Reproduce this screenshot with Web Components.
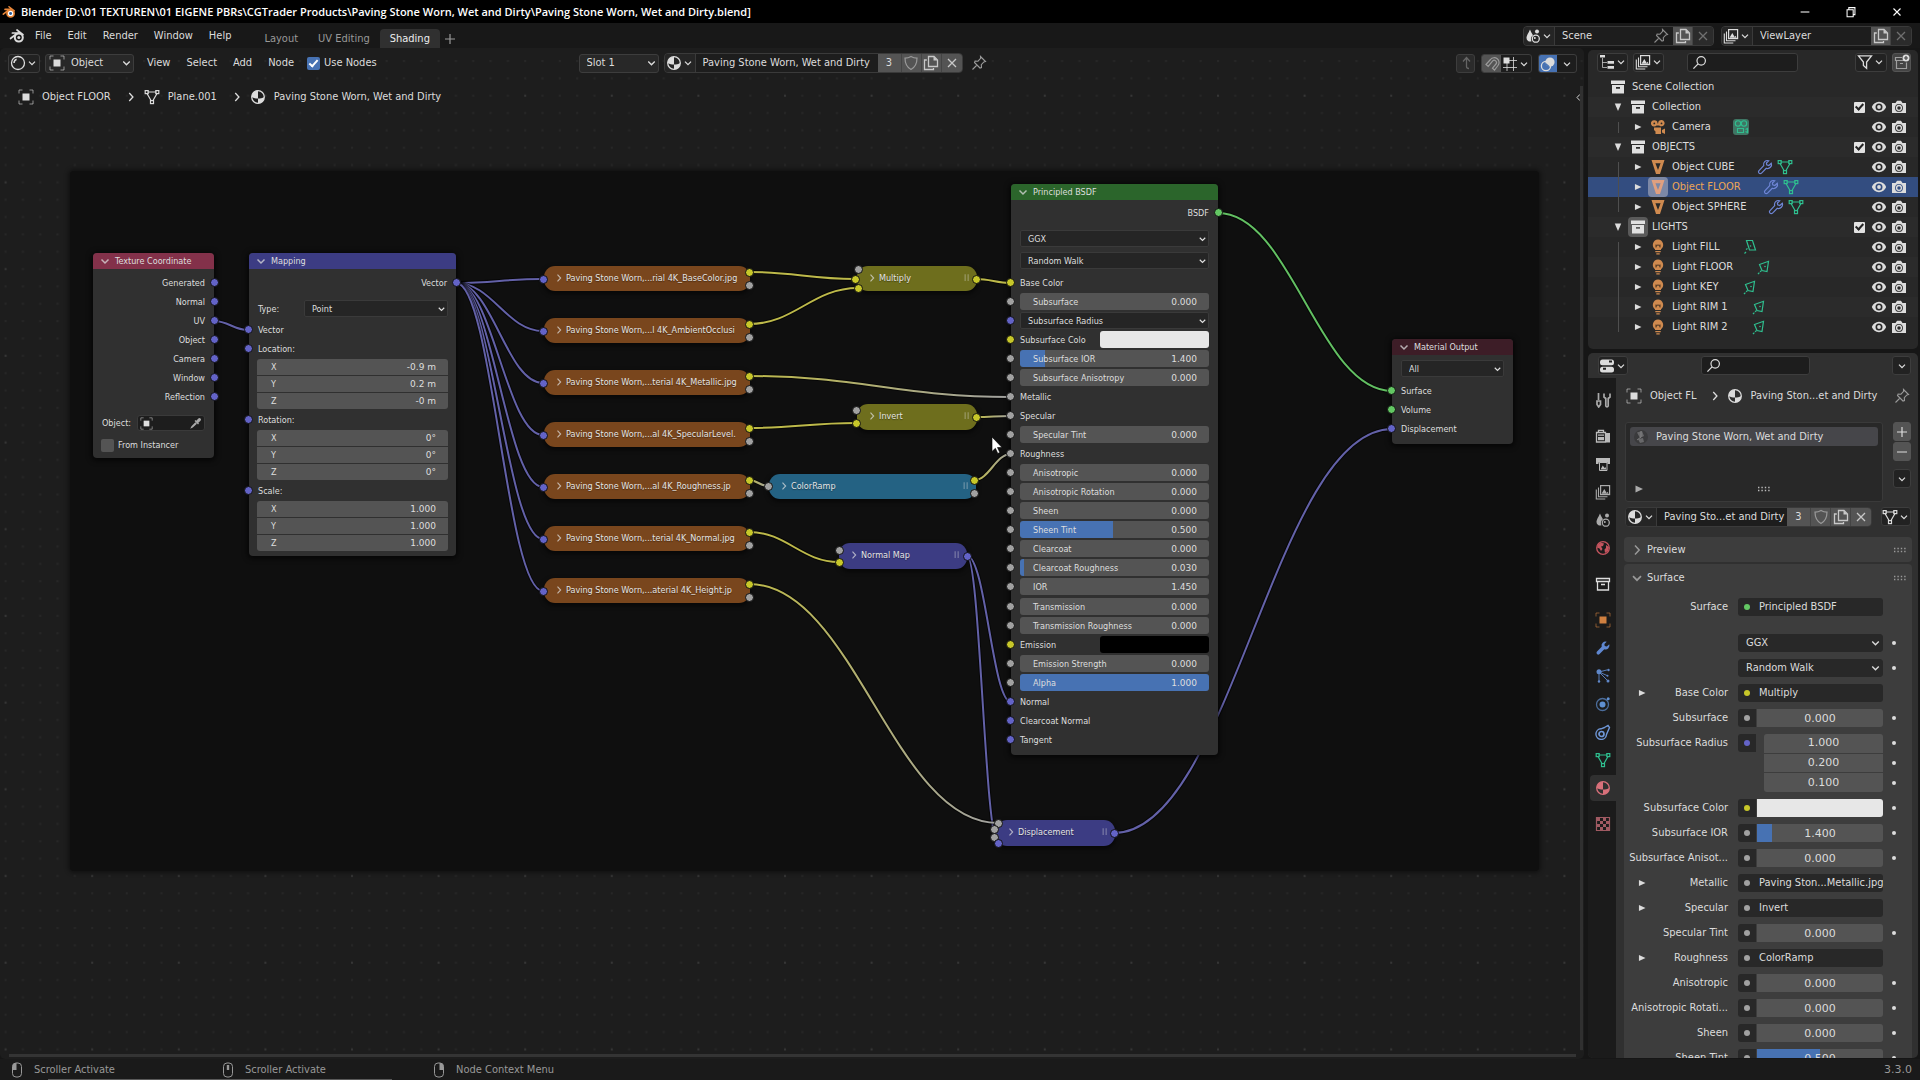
<!DOCTYPE html>
<html lang="en">
<head>
<meta charset="utf-8">
<title>Blender</title>
<style>
html,body{margin:0;height:100%;background:#161616}
body{font:11px/14px "DejaVu Sans Condensed","DejaVu Sans",sans-serif;color:#dcdcdc;overflow:hidden}
</style>
</head>
<body>
<bl-app></bl-app>
<script>
const ICONS={
logo:'<path d="M1.5 10.5 8.6 5H3.4M8 2l6 4.6" fill="none" stroke="currentColor" stroke-width="1.7" stroke-linecap="round"/><circle cx="9.8" cy="9.6" r="4" fill="none" stroke="currentColor" stroke-width="2"/><circle cx="9.8" cy="9.6" r="1.5" fill="currentColor"/>',
logoc:'<path d="M1.5 10.5 8.6 5H3.4M8 2l6 4.6" fill="none" stroke="#e8873a" stroke-width="1.8" stroke-linecap="round"/><circle cx="9.8" cy="9.6" r="4" fill="#fff" stroke="#e8873a" stroke-width="2"/><circle cx="9.8" cy="9.6" r="1.7" fill="#2a5a94"/>',
down:'<path d="M4 6.2 8 10.2 12 6.2" fill="none" stroke="currentColor" stroke-width="1.7"/>',
right:'<path d="M6 3.5 10.2 8 6 12.5" fill="none" stroke="currentColor" stroke-width="1.5"/>',
left:'<path d="M10 3.5 5.8 8 10 12.5" fill="none" stroke="currentColor" stroke-width="1.4"/>',
tright:'<path d="M4.5 4.500v7L12 8z" fill="currentColor"/>',
tdown:'<path d="M4.3 4h7.4L8 12.500z" fill="currentColor"/>',
object:'<rect x="4.5" y="4.5" width="7" height="7" fill="currentColor"/><path d="M1 4.5V1h3.5M11.500 1H15v3.500M15 11.500V15h-3.500M4.500 15H1v-3.500" fill="none" stroke="currentColor" stroke-opacity=".6"/>',
mesh:'<path d="M3.500 3h9M3 4.500 7.300 12M13 4.500 8.700 12" fill="none" stroke="currentColor" stroke-width="1.200"/><g fill="none" stroke="currentColor" stroke-width="1.200"><rect x="1.200" y="1.600" width="3" height="3"/><rect x="11.800" y="1.600" width="3" height="3"/><rect x="6.500" y="11.600" width="3" height="3"/></g>',
material:'<circle cx="8" cy="8" r="6.300" fill="none" stroke="currentColor" stroke-width="1.300"/><path d="M8 1.700A6.300 6.300 0 0 0 1.700 8c2 1.200 4 1.600 6.300 1.600zM8 9.600c2.200 0 4.400-.6 6.300-1.600A6.300 6.300 0 0 1 8 14.300z" fill="currentColor"/>',
sphere:'<circle cx="8" cy="8" r="6.500" fill="none" stroke="currentColor" stroke-width="1.300"/><path d="M4 8a4 4 0 0 1 2.600-3.700" fill="none" stroke="currentColor" stroke-width="1.500"/>',
shield:'<path d="M8 1.500c2 1.200 4 1.600 6 1.600 0 5.400-1.400 9-6 11.400C3.400 12.100 2 8.500 2 3.100c2 0 4-.4 6-1.600z" fill="none" stroke="currentColor" stroke-width="1.200"/>',
copy:'<path d="M5.500 1.500h5.500l3.500 3.500v6.500h-9z" fill="none" stroke="currentColor" stroke-width="1.300"/><path d="M10.500 1.200V5.500h4.200z" fill="currentColor"/><path d="M3.800 5H1.500v9.500h9V13" fill="none" stroke="currentColor" stroke-width="1.300"/>',
x:'<path d="M4 4l8 8M12 4l-8 8" fill="none" stroke="currentColor" stroke-width="1.300"/>',
pin:'<path d="M9.500 1.500l5 5-1.600.4-2.600 2.700.2 2.900-1.500.5-5.500-5.500.6-1.500 2.900.2L9.600 3.400zM6 10l-4.500 4.500" fill="none" stroke="currentColor" stroke-width="1.100"/>',
up:'<path d="M8.500 3v8.500q0 2 2.500 2M5 6.500 8.500 2.500 12 6.500" fill="none" stroke="currentColor" stroke-width="1.300"/>',
magnet:'<path d="M2 8.500l4.500-5a4.800 4.800 0 0 1 7.500 6l-3.500 4.500-2-1.800L12 8a2.200 2.200 0 0 0-3.500-2.800L4.200 10.300z" fill="none" stroke="currentColor" stroke-width="1.200"/>',
snap:'<path d="M5 5v10M11.500 1v14M1 11.500h14M6 4.500h9" stroke="currentColor" stroke-width="1" fill="none" opacity=".8"/><rect x="1.500" y="1.500" width="6" height="6" fill="currentColor"/>',
overlay:'<circle cx="10" cy="6" r="4.600" fill="currentColor"/><circle cx="6" cy="10" r="4.600" fill="none" stroke="currentColor" stroke-width="1.300"/><path d="M5.500 7.500 9 10.500" stroke="#4772b3" stroke-width="1.200"/>',
outliner:'<path d="M3.500 4v9.500H8M3.500 8.500H8" fill="none" stroke="currentColor" opacity=".7"/><path d="M1 1h5v2.600H1zM8.500 7h6.500v2.800H8.500zM8.500 12h6.500v2.800H8.500z" fill="currentColor"/>',
images:'<rect x="5.600" y="1.600" width="9" height="9" fill="none" stroke="currentColor" stroke-width="1.200"/><path d="M6.500 9.800 9.300 5l2.400 4 1-1.200 1 2z" fill="currentColor"/><path d="M3.500 3.500v9.200h9M1.300 5.500V15h9" fill="none" stroke="currentColor" stroke-width="1.100"/>',
search:'<circle cx="9.800" cy="6.200" r="4.500" fill="none" stroke="currentColor" stroke-width="1.300"/><path d="M6.500 9.500 1.500 14.500" stroke="currentColor" stroke-width="1.400"/>',
filter:'<path d="M1.500 1.800h13L9.600 8v6.300L6.400 11.500V8z" fill="none" stroke="currentColor" stroke-width="1.300"/>',
newcoll:'<path d="M8 3.500H1.500v3h10M2.500 6.500V14.500h10V8.500M6 9.500h3" fill="none" stroke="currentColor" stroke-opacity=".6" stroke-width="1.200"/><circle cx="12" cy="4" r="3.500" fill="currentColor"/><path d="M12 2v4M10 4h4" stroke="#444" stroke-width="1.200"/>',
coll:'<path d="M1 1.500h14v3.500H1zM2 6h12v8.500H2zM6 8v1.700h4V8z" fill="currentColor" fill-rule="evenodd"/>',
collo:'<path d="M1.500 2.500h13v3h-13zM2.500 5.500V14h11V5.500M6 8.500h4" fill="none" stroke="currentColor" stroke-width="1.300"/>',
camera:'<path d="M4.300 1.200a3.200 3.200 0 1 0 2.300 5.300h2.600a3.200 3.200 0 1 0-1-1.900H7.500A3.200 3.200 0 0 0 4.300 1.200zM4 8.500h7V15H5.500v-2.500L4 11zM12 11l3-1.500V15l-3-1.500z" fill="currentColor"/><circle cx="4.300" cy="4.400" r=".9" fill="#282828"/><circle cx="11.500" cy="4.400" r=".9" fill="#282828"/>',
camdata:'<g fill="none" stroke="currentColor" stroke-width="1.100"><circle cx="5" cy="4.500" r="2.700"/><circle cx="11" cy="4.500" r="2.700"/><path d="M4.500 9.500h6v4h-6zM12.500 10.500l2-1v4l-2-1"/></g>',
meshobj:'<path d="M1.500 1h13L10 15H6zM5.400 4.200 8 11l2.600-6.800z" fill="currentColor" fill-rule="evenodd"/>',
wrench:'<path d="M14.300 4.200 11.800 6.500 9.700 5.900 9.400 4 11.700 1.700a4 4 0 0 0-5 5L1.800 11.800a1.800 1.800 0 0 0 2.500 2.500L9.300 9.300a4 4 0 0 0 5-5.100z" fill="none" stroke="currentColor" stroke-width="1.200"/>',
wrenchf:'<path d="M14.300 4.200 11.800 6.500 9.700 5.900 9.400 4 11.700 1.700a4 4 0 0 0-5 5L1.800 11.800a1.800 1.800 0 0 0 2.500 2.500L9.300 9.300a4 4 0 0 0 5-5.100z" fill="currentColor"/>',
bulb:'<path d="M8 .5a5.400 5.400 0 0 0-3 9.700V11h6v-.8A5.400 5.400 0 0 0 8 .5zM5.300 12h5.400v1.200H5.300zM6.300 14.200h3.400v1.200H6.300z" fill="currentColor"/><path d="M6 5.500v3M6 7.200l2-1.400 2 1.400M10 5.500v3" stroke="#3a2a1c" stroke-width=".9" fill="none"/>',
area:'<path d="M5.500 1.500h6l3 9.500H8.500z" fill="none" stroke="currentColor" stroke-width="1.200"/><circle cx="9.500" cy="7" r=".8" fill="currentColor"/><path d="M6.500 9.500 5 10.500M5 13l-1.500 1.500" stroke="currentColor" stroke-width="1.200"/>',
spot:'<path d="M4.500 5.500 13.500 2.300 12 12.500 7 11.500z" fill="none" stroke="currentColor" stroke-width="1.200"/><circle cx="10" cy="7.500" r=".8" fill="currentColor"/><path d="M6.500 11.500l-4 4" stroke="currentColor" stroke-width="1.200" stroke-dasharray="2 1"/>',
eye:'<path d="M8 2.800C4.800 2.800 2 5 .8 8 2 11 4.800 13.200 8 13.200S14 11 15.200 8C14 5 11.200 2.800 8 2.800zm0 1.700a3.500 3.500 0 1 1 0 7 3.500 3.500 0 0 1 0-7z" fill="currentColor" fill-rule="evenodd"/><circle cx="8" cy="8" r="1.900" fill="currentColor"/>',
rcam:'<path d="M1 4h3.500L6 1.800h4L11.500 4H15v10H1zM8 5a3.900 3.900 0 1 0 0 7.800A3.900 3.900 0 0 0 8 5z" fill="currentColor" fill-rule="evenodd"/><circle cx="8" cy="8.900" r="2.400" fill="none" stroke="currentColor" stroke-width="1.300"/>',
scene:'<path d="M5 1.500C3 6 1.500 7.800 1.500 10a3.500 3.500 0 0 0 5 3.200 4.800 4.800 0 0 1 1.500-6C7 5.500 6 4 5 1.500z" fill="currentColor"/><circle cx="12" cy="3.500" r="2" fill="currentColor"/><circle cx="10.800" cy="10.700" r="3.500" fill="none" stroke="currentColor" stroke-width="1.300"/><circle cx="9.800" cy="10" r="1" fill="currentColor"/>',
props:'<rect x="1" y="1.500" width="14" height="5.800" rx="2.500" fill="currentColor"/><rect x="1" y="8.700" width="14" height="5.800" rx="2.500" fill="currentColor"/><path d="M10 3.500h3M4 10.700h3" stroke="#222" stroke-width="2"/>',
tool:'<path d="M3.500 1v7M2 9h3.500v3.500L3.700 15 2 12.500zM9 1.500v3.500l1.800 1.500V14a1.300 1.300 0 0 0 2.400 0V6.500L15 5V1.500" fill="none" stroke="currentColor" stroke-width="1.700"/>',
render:'<path d="M1.500 4.500h9v9.500h-9zM3.500 4V2.300h5V4" fill="none" stroke="currentColor" stroke-width="1.300"/><path d="M11 5h4v9.500h-4zM3 6.500h6v1.200H3zM3 9h6v3.200H3z" fill="currentColor"/>',
output:'<path d="M1 2h14v6h-2.500V6.500h-9V8H1z" fill="currentColor"/><path d="M4.500 6.500h7.500v8H4.500z" fill="none" stroke="currentColor"/><path d="M5.500 13.500 7.800 9.500l1.700 2.500.8-1 1.200 2.500z" fill="currentColor"/>',
world:'<circle cx="8" cy="8" r="6.300" fill="none" stroke="currentColor" stroke-width="1.300"/><path d="M3 4.500c2-2 5-1.800 6-1L8 6l-2 .5L7.500 9 6 11 4.500 8.500 2 7.500zM11 5l3 2-1 4-3 2-.5-3.500L11 8z" fill="currentColor"/>',
particles:'<path d="M4 4 12.500 1.800M4 4l8.500 8.500M4 4l8 3.500M4 4v9" stroke="currentColor" stroke-width=".9"/><circle cx="4" cy="3.800" r="2.500" fill="currentColor"/><circle cx="13.500" cy="2" r="1.200" fill="currentColor"/><circle cx="4" cy="13.500" r="1.200" fill="currentColor"/><circle cx="13" cy="13" r="1.500" fill="currentColor"/><circle cx="12.500" cy="7.700" r="1" fill="currentColor"/>',
physics:'<circle cx="7.500" cy="8.500" r="6" fill="none" stroke="currentColor" stroke-width="1.300" stroke-opacity=".7"/><circle cx="7.500" cy="8.500" r="3" fill="currentColor"/><circle cx="13.200" cy="2.800" r="1.500" fill="currentColor"/>',
constraint:'<path d="M9.500 3.500 13 1.500l1.500 2-3 7A5.300 5.300 0 1 1 6 4.800z" fill="none" stroke="currentColor" stroke-width="1.400"/><circle cx="6.500" cy="10" r="2.500" fill="none" stroke="currentColor" stroke-width="1.700"/>',
checker:'<path d="M1.500 1.500h13v13h-13z" fill="none" stroke="currentColor" stroke-width="1.200"/><path d="M2 2h3v3H2zM8 2h3v3H8zM5 5h3v3H5zM11 5h3v3h-3zM2 8h3v3H2zM8 8h3v3H8zM5 11h3v3H5zM11 11h3v3h-3z" fill="currentColor"/>',
dropper:'<path d="M9 4.500 11.500 1.800a1.900 1.900 0 0 1 2.700 2.700L11.500 7l.8 1-1.200 1.200L6.800 5l1.200-1.200zM7.800 6.500 3 11.300 1.500 14.500 4.700 13l5-4.600z" fill="currentColor"/>',
mousel:'<rect x="3.500" y="1" width="9" height="14" rx="3.500" fill="none" stroke="currentColor"/><path d="M7.500 1v7h-4V4.500A3.500 3.500 0 0 1 7 1z" fill="currentColor"/>',
mousem:'<rect x="3.500" y="1" width="9" height="14" rx="3.500" fill="none" stroke="currentColor"/><rect x="6.800" y="3" width="2.400" height="5" fill="currentColor"/>',
mouser:'<rect x="3.500" y="1" width="9" height="14" rx="3.500" fill="none" stroke="currentColor"/><path d="M8.500 1v7h4V4.500A3.500 3.500 0 0 0 9 1z" fill="currentColor"/>',
plus:'<path d="M8 3v10M3 8h10" stroke="currentColor" stroke-width="1.200"/>',
minus:'<path d="M3 8h10" stroke="currentColor" stroke-width="1.200"/>',
restore:'<path d="M3.500 5.500h7v8h-7zM5.500 5V3h7v8h-1.500" fill="none" stroke="currentColor" stroke-width="1.200"/>',
grip:'<path d="M2 6.500h12M2 9.500h12" stroke="currentColor" stroke-width="1.400" stroke-dasharray="1.400 2"/>',
grab:'<path d="M5.500 3v9M9.500 3v9" stroke="currentColor" stroke-width="1.300"/>',
stone:'<circle cx="8" cy="8" r="7" fill="#3a3a3c"/><path d="M4 3.500 9 2l2 5-4 2zM5 10l5-1 1 4-4 1z" fill="#68686a"/><path d="M8 2v6l-4 3" stroke="#888" fill="none" stroke-width=".8"/>'
};
const def=(tag,css,html)=>customElements.define(tag,class extends HTMLElement{
  connectedCallback(){
    if(this.shadowRoot)return;
    const a=n=>this.getAttribute(n)??'';
    this.attachShadow({mode:'open'}).innerHTML='<style>*{box-sizing:border-box}button,input,select{font:inherit;color:inherit;margin:0;padding:0;border:0;background:none;outline:0;min-width:0}button{display:flex;align-items:center;justify-content:center}'+css+'</style>'+(typeof html==='function'?html(a,this):html);
  }
});
const ic=(n,c)=>`<bl-icon name="${n}"${c?` style="color:${c}"`:''}></bl-icon>`;

def('bl-icon',':host{display:block;flex:none;width:16px;height:16px}svg{display:block;width:100%;height:100%}',
 a=>`<svg viewBox="0 0 16 16" aria-hidden="true">${ICONS[a('name')]}</svg>`);

/* drop-down list with a chevron in the same grid cell */
def('bl-select',`:host{display:grid;height:19px;background:#282828;border:1px solid #3d3d3d;border-radius:3px}
:host([flat]){height:18px;border-color:#282828}
:host([node]){height:17px;background:#252525;border-color:#3a3a3a;border-radius:2px}
select{grid-area:1/1;appearance:none;width:100%;padding:0 18px 0 7px}
:host([icon]) select{padding-left:25px}
.c{grid-area:1/1;justify-self:end;align-self:center;width:13px;pointer-events:none}
:host([node]) .c{width:11px}
.i{grid-area:1/1;align-self:center;margin-left:3px}`,
 a=>`<select aria-label="${a('label')}"><option>${a('value')}</option></select>${a('icon')?`<bl-icon class="i" name="${a('icon')}"></bl-icon>`:''}<bl-icon class="c" name="down"></bl-icon>`);

/* icon button with an optional chevron */
def('bl-button',`:host{display:flex;height:19px;border:1px solid #3d3d3d;border-radius:3px;background:#222;overflow:hidden;flex:none}
button{flex:1;height:100%}bl-icon{width:16px;height:16px}.d{width:12px}
:host([plain]){border:0;background:none;border-radius:0}:host([lit]){background:#545454;border-color:#545454}
:host([blue]){background:#4772b3}`,
 a=>`<button aria-label="${a('label')}">${a('icon')?ic(a('icon')):''}${a('menu')?'<bl-icon class="d" name="down"></bl-icon>':''}</button>`);

def('bl-group',':host{display:flex;height:19px;border:1px solid #3d3d3d;border-radius:3px;overflow:hidden;align-items:stretch;background:#1d1d1d;flex:none}','<slot></slot>');

/* data-block selector */
def('bl-datablock',`:host{display:flex;height:20px;border:1px solid #3a3a3a;border-radius:4px;overflow:hidden;background:#282828}
bl-button{height:100%}.f{width:31px;background:#252525;border-right:1px solid #3a3a3a}
input{flex:1;width:0;background:#1d1d1d;padding-left:7px}.n{background:#545454;width:24px;border-right:1px solid #444}
.b{width:20px;background:#545454;color:#c8c8c8;border-right:1px solid #444}.dim{background:#2b2b2b;color:#707070;border:0}.x{border:0}
.p{display:flex;align-items:center;background:#1d1d1d;color:#8a8a8a;padding-right:4px}`,
 a=>`<bl-button plain menu="1" class="f" icon="${a('icon')}" label="Browse ${a('label')}"></bl-button><input type="text" aria-label="${a('label')}" value="${a('value')}">`+
 (a('users')?`<button class="n">${a('users')}</button><bl-button plain class="b" style="color:#9a9a9a" icon="shield" label="Fake user"></bl-button><bl-button plain class="b" icon="copy" label="New"></bl-button><bl-button plain class="b x" icon="x" label="Unlink"></bl-button>`
 :`${a('pin')?`<span class="p">${ic('pin')}</span>`:''}<bl-button plain class="b" icon="copy" label="New"></bl-button><bl-button plain class="b dim" icon="x" label="Remove"></bl-button>`));

def('bl-check',`:host{display:flex}label{display:flex;align-items:center;gap:4px}
input{appearance:none;width:13px;height:13px;border-radius:2px;background:#545454;display:grid;place-items:center;flex:none}
input:checked{background:#4772b3}input:checked::before{content:"";width:3px;height:7px;border:solid #fff;border-width:0 2px 2px 0;transform:translateY(-1px) rotate(42deg)}
:host([white]) input{width:11px;height:11px;background:#e2e2e2;border-radius:1px}:host([white]) input::before{border-color:#222;height:6px}`,
 a=>`<label><input type="checkbox" ${a('on')?'checked':''} ${a('text')?'':`aria-label="${a('label')}"`}>${a('text')?`<span>${a('text')}</span>`:''}</label>`);

def('bl-titlebar',`:host{display:flex;height:23px;background:#000;color:#fff;align-items:center;font:600 11px/16px "Open Sans",sans-serif;padding-left:2px}
h1{font:inherit;margin:0 auto 0 5px;white-space:nowrap}button{width:46px;height:23px}bl-icon{width:14px}nav{display:flex}`,
 `${ic('logoc')}<h1>Blender [D:\\01 TEXTUREN\\01 EIGENE PBRs\\CGTrader Products\\Paving Stone Worn, Wet and Dirty\\Paving Stone Worn, Wet and Dirty.blend]</h1><nav><button aria-label="Minimize">${ic('minus')}</button><button aria-label="Restore">${ic('restore')}</button><button aria-label="Close">${ic('x')}</button></nav>`);

def('bl-topbar',`:host{display:flex;height:25px;background:#181818;align-items:center;padding:0 8px 0 9px}
.m{display:flex;margin-left:2px}.m button{padding:0 8px;height:20px}.t{display:flex;align-self:flex-end;margin-left:15px;color:#999}
.t button{height:19px;padding:0 10px;border-radius:4px 4px 0 0}.t .on{background:#303030;color:#eee}.t .add{padding:0 2px}
.r{display:flex;gap:7px;margin-left:auto}.r bl-datablock{width:191px}`,
 `${ic('logo')}<nav class="m"><button>File</button><button>Edit</button><button>Render</button><button>Window</button><button>Help</button></nav>
<nav class="t"><button>Layout</button><button>UV Editing</button><button class="on">Shading</button><button class="add" aria-label="Add workspace">${ic('plus')}</button></nav>
<div class="r"><bl-datablock icon="scene" label="Scene" value="Scene" pin="1"></bl-datablock><bl-datablock icon="images" label="View layer" value="ViewLayer"></bl-datablock></div>`);

def('bl-statusbar',`:host{display:flex;height:21px;background:linear-gradient(#5a5a5a,#5a5a5a) 48px 100%/344px 1px no-repeat #1a1a1a;align-items:center;color:#989898;padding:0 8px 0 9px}
span{display:flex;align-items:center;gap:9px;width:211px}b{font:11px/14px "DejaVu Sans",sans-serif;margin-left:auto}`,
 `<span>${ic('mousel')}Scroller Activate</span><span>${ic('mousem')}Scroller Activate</span><span>${ic('mouser')}Node Context Menu</span><b>3.3.0</b>`);

/* ---- node parts ---- */
const COL={v:'#6363c7',y:'#c7c729',g:'#a1a1a1',s:'#63c763'};
def('bl-dot',':host{display:block;width:9px;height:9px;border-radius:50%;border:1px solid #111;background:var(--c)}','');
/* one socket row of a node */
def('bl-row',`:host{display:flex;height:19px;align-items:center;position:relative;padding:0 9px}
:host([out]){justify-content:flex-end}bl-dot{position:absolute;left:-5px;top:5px}:host([out]) bl-dot{left:auto;right:-5px}
::slotted(*){flex:1;min-width:0}`,
 a=>`<slot></slot><bl-dot style="--c:${COL[a('c')]}"></bl-dot>`);
/* labelled number field, blue part shows the slider position */
def('bl-num',`:host{display:block;height:17px}label{display:flex;height:100%;align-items:center;padding:0 12px 0 13px;border-radius:3px;background:linear-gradient(90deg,#4772b3 var(--p),#545454 var(--p))}
span{flex:none}input{flex:1;width:0;text-align:right;font-family:"DejaVu Sans",sans-serif}`,
 a=>`<label style="--p:${a('fill')||0}%"><span>${a('label')}</span><input type="text" value="${a('value')}"></label>`);
def('bl-xyz',`:host{display:flex;flex-direction:column;height:50px;margin:1px 8px;border-radius:3px;overflow:hidden;gap:1px}
label{flex:1;display:flex;align-items:center;background:#545454;padding:0 12px 0 14px}input{flex:1;width:0;text-align:right;font-family:"DejaVu Sans",sans-serif}`,
 a=>a('values').split(',').map((v,i)=>`<label><span>${'XYZ'[i]}</span><input type="text" value="${v}"></label>`).join(''));
def('bl-swatch',':host{display:flex;align-items:center;gap:6px;height:17px}label{flex:1;white-space:nowrap}button{width:109px;height:17px;border-radius:3px;background:var(--c)}',
 a=>`<label>${a('label')}</label><button style="--c:${a('color')}" aria-label="${a('label')}"></button>`);
def('bl-node',`:host{display:block;position:absolute;font-size:9px;line-height:12px;background:#303030;border-radius:4px;box-shadow:0 1px 5px 2px #0009;color:#dedede}
header{height:16px;display:flex;align-items:center;border-radius:4px 4px 0 0;background:var(--h);padding-left:5px;gap:3px}bl-icon{width:14px;height:14px;opacity:.75}`,
 a=>`<header>${ic('down')}<span>${a('title')}</span></header><slot></slot>`);
def('bl-pill',`:host{display:flex;align-items:center;position:absolute;box-sizing:border-box;font-size:9px;line-height:12px;border-radius:11px;background:var(--h);box-shadow:0 2px 4px 1px #0008;color:#e4e4e4;text-shadow:0 1px 1px #0006;white-space:nowrap;padding:0 0 2px 9px;gap:1px}
bl-icon{width:12px;height:12px;opacity:.7}span{flex:1;width:0;overflow:hidden}.g{margin-right:4px;opacity:.45}bl-dot{position:absolute}`,
 a=>`${ic('right')}<span>${a('title')}</span>${a('wide')?'':'<bl-icon class="g" name="grab"></bl-icon>'}${a('dots').split(' ').map(d=>{const[c,x,y]=d.split(',');return`<bl-dot style="--c:${COL[c]};left:${x-4}px;top:${y-4}px"></bl-dot>`}).join('')}`);

const at=(x,y,w,h)=>`left:${x}px;top:${y-48}px;width:${w}px;${h?`height:${h}px;`:''}`;
const link=(x1,y1,x2,y2,c1,c2)=>{const h=Math.abs(x2-x1)*.42,d=`M${x1} ${y1}C${x1+h} ${y1} ${x2-h} ${y2} ${x2} ${y2}`;
 const S={v:'#6361a8',y:'#bdb94a',g:'#a1a1a1',s:'#62bf62'};let id='k'+x1+y1+x2;
 const g=c2?`<linearGradient id="${id}" gradientUnits="userSpaceOnUse" x1="${x1}" x2="${x2}" y1="0" y2="0"><stop stop-color="${S[c1]}"/><stop offset="1" stop-color="${S[c2]}"/></linearGradient>`:'';
 return `${g}<path d="${d}" stroke="#000" stroke-opacity=".6" stroke-width="4"/><path d="${d}" stroke="${c2?`url(#${id})`:S[c1]}" stroke-width="2"/>`;};
const num=(l,v,f)=>`<bl-row c="g"><bl-num label="${l}" value="${v}" fill="${f||0}"></bl-num></bl-row>`;
const names=['rial 4K_BaseColor.jpg','l 4K_AmbientOcclusi','terial 4K_Metallic.jpg','al 4K_SpecularLevel.','al 4K_Roughness.jp','terial 4K_Normal.jpg','aterial 4K_Height.jp'];
def('bl-canvas',`:host{display:block;position:absolute;inset:0;overflow:hidden}
svg.w{position:absolute;inset:0;width:100%;height:100%}.frame{position:absolute;background:#0f0f0f;border-radius:4px;box-shadow:0 0 4px 2px #0006}
.type{display:grid;grid-template-columns:46px 1fr;align-items:center;margin:8px 8px 3px 9px}
.ob{display:grid;grid-template-columns:35px 1fr;align-items:center;margin:9px 9px 7px;height:16px}
.ob div{display:flex;height:16px;background:#1d1d1d;border:1px solid #3a3a3a;border-radius:3px;align-items:center;justify-content:space-between;padding:0 2px}.ob bl-icon{width:13px;height:13px}
.ob input{flex:1;width:0}.p3{padding-top:4px}bl-check{margin:0 8px 6px;height:14px}.cur{position:absolute;width:12px;height:19px}`,
 `<svg class="w" fill="none"><defs><pattern id="dots" patternUnits="userSpaceOnUse" x="3.600" y="3" width="86.600" height="86.700"><g fill="#272727">${Array.from({length:25},(_,i)=>`<rect x="${(i%5)*17.32+1}" y="${Math.floor(i/5)*17.34+9}" width="2" height="2"/>`).join('')}</g><rect x="1" y="43.700" width="2" height="2" fill="#363636"/></pattern></defs><rect width="100%" height="100%" fill="url(#dots)"/></svg>
<div class="frame" style="${at(70,171,1469,700)}"></div>
<svg class="w" fill="none"><g transform="translate(0 -48)">
${link(214,321,248,330,'v')}${[0,1,2,3,4,5,6].map(i=>link(456,283,543,279+52*i,'v')).join('')}
${link(749,272,855,279,'y')}${link(749,324,858,288,'y')}${link(976,279,1011,283,'y')}${link(749,376,1011,397,'y','g')}
${link(749,428,856,423,'y')}${link(976,417,1011,416,'y','g')}${link(749,480,768,486,'y','g')}${link(974,480,1011,454,'y','g')}
${link(749,532,839,562,'y')}${link(967,556,1011,702,'v')}${link(967,556,998,843,'v')}${link(749,584,998,823,'y','g')}
${link(1218,213,1392,391,'s')}${link(1114,833,1392,429,'v')}</g></svg>
<bl-node title="Texture Coordinate" style="--h:#83314a;${at(93,253,121)}"><div class="p3">${['Generated','Normal','UV','Object','Camera','Window','Reflection'].map(n=>`<bl-row out c="v">${n}</bl-row>`).join('')}</div>
<div class="ob"><label for="ob">Object:</label><div>${ic('object')}<input id="ob" type="text">${ic('dropper','#aaa')}</div></div><bl-check text="From Instancer"></bl-check></bl-node>
<bl-node title="Mapping" style="--h:#3c3c83;${at(249,253,207,303)}"><div class="p3"><bl-row out c="v">Vector</bl-row></div>
<div class="type"><span>Type:</span><bl-select node label="Type" value="Point"></bl-select></div>
<bl-row c="v">Vector</bl-row><bl-row c="v">Location:</bl-row><bl-xyz values="-0.9 m,0.2 m,-0 m"></bl-xyz><bl-row c="v">Rotation:</bl-row><bl-xyz values="0°,0°,0°"></bl-xyz><bl-row c="v">Scale:</bl-row><bl-xyz values="1.000,1.000,1.000"></bl-xyz></bl-node>
${names.map((n,i)=>`<bl-pill wide="1" title="Paving Stone Worn,...${n}" dots="v,-1,13 y,205,6 g,205,19" style="--h:#79461d;${at(544,266+52*i,206,25)}"></bl-pill>`).join('')}
<bl-pill title="Multiply" dots="g,1,3 y,-2,13 y,1,22 y,119,13" style="--h:#6e6e1d;${at(857,266,120,25)}"></bl-pill>
<bl-pill title="Invert" dots="g,-1,6 y,-1,19 y,119,13" style="--h:#6e6e1d;${at(857,404,120,26)}"></bl-pill>
<bl-pill title="ColorRamp" dots="g,-1,12 y,205,6 g,205,19" style="--h:#246283;${at(769,474,207,25)}"></bl-pill>
<bl-pill title="Normal Map" dots="g,0,7 y,0,19 v,128,13" style="--h:#3c3c83;${at(839,543,128,26)}"></bl-pill>
<bl-pill title="Displacement" dots="g,2,3 g,-2,9 g,-2,17 v,2,23 v,118,13" style="--h:#3c3c83;${at(996,820,119,26)}"></bl-pill>
<bl-node title="Principled BSDF" style="--h:#2b652b;${at(1011,184,207)}padding-bottom:6px"><div style="padding:3px 0 8px"><bl-row out c="s">BSDF</bl-row></div>
<bl-select node label="Distribution" value="GGX" style="margin:0 9px 5px"></bl-select><bl-select node label="Subsurface method" value="Random Walk" style="margin:0 9px 4px"></bl-select>
<bl-row c="y">Base Color</bl-row>${num('Subsurface','0.000')}<bl-row c="v"><bl-select node label="Radius" value="Subsurface Radius"></bl-select></bl-row>
<bl-row c="y"><bl-swatch label="Subsurface Colo" color="#e7e7e7"></bl-swatch></bl-row>${num('Subsurface IOR','1.400',13)}${num('Subsurface Anisotropy','0.000')}
<bl-row c="g">Metallic</bl-row><bl-row c="g">Specular</bl-row>${num('Specular Tint','0.000')}<bl-row c="g">Roughness</bl-row>
${num('Anisotropic','0.000')}${num('Anisotropic Rotation','0.000')}${num('Sheen','0.000')}${num('Sheen Tint','0.500',49)}${num('Clearcoat','0.000')}${num('Clearcoat Roughness','0.030',2)}${num('IOR','1.450')}<div style="padding-top:1px">${num('Transmission','0.000')}${num('Transmission Roughness','0.000')}</div>
<bl-row c="y"><bl-swatch label="Emission" color="#000"></bl-swatch></bl-row>${num('Emission Strength','0.000')}${num('Alpha','1.000',100)}
<bl-row c="v">Normal</bl-row><bl-row c="v">Clearcoat Normal</bl-row><bl-row c="v">Tangent</bl-row></bl-node>
<bl-node title="Material Output" style="--h:#3d1d27;${at(1392,339,121)}padding-bottom:6px"><bl-select node label="Target" value="All" style="margin:5px 9px 4px"></bl-select><bl-row c="s">Surface</bl-row><bl-row c="s">Volume</bl-row><bl-row c="v">Displacement</bl-row></bl-node>
<svg class="cur" style="left:991px;top:388px" viewBox="0 0 12 19"><path d="M1 1v14.500l3.400-3.200L6.800 17.500l2-1-2.300-5H11z" fill="#fff" stroke="#000" stroke-width=".6"/></svg>`);

def('bl-editor',`:host{display:flex;flex-direction:column;position:relative;background:#1d1d1d;border-radius:5px;overflow:hidden;min-width:0}
.h{position:relative;display:flex;align-items:center;height:30px;padding:0 7px 0 8px;gap:5px}.m{display:flex}.m button{padding:0 8px;height:19px}
.l,.r{flex:1;display:flex;align-items:center;gap:5px}.r{justify-content:flex-end;gap:6px}.mid{display:flex;gap:5px;align-items:center;margin-right:20px}
.b{position:relative;display:flex;align-items:center;height:38px;padding:0 0 0 18px}.b span{margin:0 0 0 8px}.b .s{margin:0 6px 0 13px;width:14px}
.edge{margin-left:auto;width:11px;height:11px}.sv{position:absolute;right:1px;top:38px;bottom:9px;width:3px;background:#303030}.sh{position:absolute;left:9px;right:8px;bottom:2px;height:3px;background:#343434}`,
 `<bl-canvas></bl-canvas><div class="h"><div class="l"><bl-button icon="sphere" menu="1" label="Editor type" style="width:32px"></bl-button><bl-select icon="object" label="Shader type" value="Object" style="width:89px"></bl-select><nav class="m"><button>View</button><button>Select</button><button>Add</button><button>Node</button></nav><bl-check on="1" text="Use Nodes"></bl-check></div>
<div class="mid"><bl-select label="Slot" value="Slot 1" style="width:80px"></bl-select><bl-datablock icon="material" users="3" label="Material" value="Paving Stone Worn, Wet and Dirty" style="width:299px"></bl-datablock><span style="padding-left:3px;color:#9a9a9a">${ic('pin')}</span></div>
<div class="r"><bl-button icon="up" label="Parent" style="width:19px;color:#666;background:#2b2b2b"></bl-button><bl-group><bl-button plain lit icon="magnet" label="Snap" style="width:19px;color:#9a9a9a"></bl-button><bl-button plain icon="snap" menu="1" label="Snap to" style="width:30px"></bl-button></bl-group><bl-group><bl-button plain blue icon="overlay" label="Overlays" style="width:18px"></bl-button><bl-button plain menu="1" label="Overlay options" style="width:19px"></bl-button></bl-group></div></div>
<div class="b">${ic('object')}<span>Object FLOOR</span><bl-icon class="s" name="right"></bl-icon>${ic('mesh')}<span>Plane.001</span><bl-icon class="s" name="right"></bl-icon>${ic('material')}<span>Paving Stone Worn, Wet and Dirty</span><bl-icon class="edge" name="left"></bl-icon></div>
<div class="sv"></div><div class="sh"></div>`);

/* ---- outliner ---- */
def('bl-tree',`:host{display:flex;height:20px;align-items:center;padding:0 9px 0 20px}:host([sel]){background:#334d80!important}
.c{width:20px;height:20px;display:flex;align-items:center;justify-content:center;flex:none}.t bl-icon{width:14px;height:14px}
.g::before{content:"";width:1px;height:100%;background:#4f4f4f}.first::before{height:15px;margin-top:5px}.last::before{height:15px;margin-bottom:5px}.first.last::before{height:11px;margin:0}
.n{margin:0 22px 0 4px;white-space:nowrap}.x{margin-right:4px}.e{margin-left:auto;display:flex}.hl{background:#5a5a5a;border-radius:4px}:host([sel]) .n{color:#eda655}:host([sel]) .hl{background:#7c88a6}`,
 a=>{const d=+a('depth');return (d==2?`<span class="c g ${a('edge')}"></span>`:'')+(d?`<button class="c t" aria-label="Expand">${ic(d==1?'tdown':'tright')}</button>`:'')+
 `<span class="c ${a('hl')?'hl':''}" style="color:${a('color')||'#e0e0e0'}">${ic(a('icon'))}</span><span class="n">${a('name')}</span>`+
 a('data').split(' ').filter(Boolean).map(x=>`<span class="x" style="${x=='camdata'?'background:#3f7664;border-radius:3px':''}">${ic(x,x=='wrench'?'#6f86d6':'#2fbf8f')}</span>`).join('')+
 (d?`<span class="e">${d==1?'<span class="c"><bl-check white on="1" label="Include"></bl-check></span>':''}<button class="c" aria-label="Hide">${ic('eye')}</button><button class="c" aria-label="Disable in renders">${ic('rcam')}</button></span>`:'');});
const O='#cf8a4f';
const tree=[[0,'Scene Collection','coll'],[1,'Collection','coll'],[2,'Camera','camera','camdata',O,'first last'],[1,'OBJECTS','coll'],[2,'Object CUBE','meshobj','wrench mesh',O,'first'],[2,'Object FLOOR','meshobj','wrench mesh','#e0a080','','sel hl="1"'],[2,'Object SPHERE','meshobj','wrench mesh',O,'last'],[1,'LIGHTS','coll','','','','hl="1"'],[2,'Light FILL','bulb','area',O,'first'],[2,'Light FLOOR','bulb','spot',O],[2,'Light KEY','bulb','spot',O],[2,'Light RIM 1','bulb','spot',O],[2,'Light RIM 2','bulb','spot',O,'last']];
def('bl-search',':host{display:flex;height:19px;background:#1d1d1d;border:1px solid #3d3d3d;border-radius:3px;align-items:center;padding-left:4px}input{flex:1;width:0;appearance:none}bl-icon{width:15px;height:15px}',
 a=>`${ic('search')}<input type="search" aria-label="${a('label')}">`);
def('bl-outliner',`:host{display:block;background:#282828;border-radius:5px;overflow:hidden;height:299px}
.h{display:flex;align-items:center;height:27px;padding:0 7px 3px 9px;gap:5px;box-sizing:border-box}bl-search{width:111px;margin:0 auto 0 18px}bl-tree:nth-child(even){background:#2b2b2b}`,
 `<div class="h"><bl-button icon="outliner" menu="1" label="Editor type" style="width:31px"></bl-button><bl-button icon="images" menu="1" label="Display mode" style="width:31px"></bl-button><bl-search label="Search outliner"></bl-search><bl-button icon="filter" menu="1" label="Filter" style="width:32px"></bl-button><bl-button lit icon="newcoll" label="New collection" style="width:19px;background:#444"></bl-button></div>
<div>${tree.map(([d,n,i,x,c,e,s])=>`<bl-tree depth="${d}" name="${n}" icon="${i}" data="${x||''}" color="${c||''}" edge="${e||''}" ${s||''}></bl-tree>`).join('')}</div>`);

/* ---- properties ---- */
def('bl-prop',`:host{display:grid;grid-template-columns:104px 1fr 19px;column-gap:10px;min-height:18px;align-items:start}
.l{display:flex;align-items:center;height:18px;justify-content:flex-end;white-space:nowrap}.l bl-icon{margin:0 auto 0 11px;width:14px;height:14px}
.f{display:flex;min-width:0}.s{width:18px;height:18px;background:#282828;display:flex;align-items:center;justify-content:center;border-radius:3px 0 0 3px;margin-right:1px;flex:none}.s::before{content:"";width:6px;height:6px;border-radius:50%;background:var(--c)}
.v{flex:1;width:0;height:18px;text-align:center;font-family:"DejaVu Sans",sans-serif;border-radius:0 3px 3px 0;background:linear-gradient(90deg,#4772b3 var(--p),#545454 var(--p))}
.k{flex:1;justify-content:flex-start;height:18px;background:#282828;border-radius:0 3px 3px 0;margin-left:-1px;padding-left:3px;white-space:nowrap;overflow:hidden}
.g{flex:1;display:flex;flex-direction:column;height:58px;gap:1px;margin-left:7px;border-radius:3px;overflow:hidden}.g .v{width:100%;height:0;border-radius:0}
.d{display:flex;flex-direction:column;align-items:flex-start;gap:2px;margin-left:-1px}.d i{height:18px;display:flex;align-items:center}.d i::before{content:"";width:4px;height:4px;border-radius:50%;background:#dcdcdc}bl-select{flex:1}`,
 a=>{const l=a('label'),v=a('value'),t=a('type');
 const s=t=='sel'?'':`<span class="s" style="--c:${({v:'#6363c7',y:'#c7c729',s:'#63c763'})[a('c')]||'#a1a1a1'}"></span>`;
 const f=t=='sel'?`<bl-select flat label="${l||v}" value="${v}"></bl-select>`:t=='link'?`<button class="k">${v}</button>`:t=='vec'?`<div class="g">${v.split(',').map((x,i)=>`<input class="v" aria-label="${l} ${i+1}" style="--p:0%" value="${x}">`).join('')}</div>`:t=='col'?`<button class="v" style="background:${v}" aria-label="${l}"></button>`:`<input id="v" class="v" type="text" style="--p:${a('fill')||0}%" value="${v}">`;
 return `<label class="l" ${t?'':'for="v"'}>${a('open')?ic('tright'):''}${t=='sel'?'':l}</label><div class="f">${s}${f}</div><span class="d">${t=='link'?'':'<i></i>'.repeat(t=='vec'?3:1)}</span>`;});
def('bl-panel',`:host{display:block;background:#3d3d3d;border-radius:4px}header{display:flex;align-items:center;height:25px;padding:0 4px;gap:2px;padding-left:5px}header bl-icon:last-child{margin-left:auto;color:#999}header button{gap:2px}header button bl-icon{color:#aaa}
:host([open]) header{height:27px}.c{display:flex;flex-direction:column;gap:7px;padding-top:7px}`,
 a=>`<header><button>${ic(a('open')?'down':'right')}${a('title')}</button>${ic('grip')}</header>${a('open')?'<div class="c"><slot></slot></div>':''}`);
const tabs=[['tool','#aaa',1],['render','#bbb'],['output','#bbb'],['images','#aaa'],['scene','#aaa'],['world','#c4545e',1],['collo','#ddd',1],['object','#d08040'],['wrenchf','#5f87d0'],['particles','#5f87c8'],['physics','#5f8fd0'],['constraint','#6f97d8'],['mesh','#2fbf8f'],['material','#d8707a',2],['checker','#a05a62']];
def('bl-properties',`:host{display:flex;flex-direction:column;flex:1;min-height:0;background:#303030;border-radius:5px;overflow:hidden}
.h{display:flex;align-items:center;height:25px;padding:0 7px 0 10px;flex:none}.h bl-search{width:109px;margin:0 auto 0 73px}
.m{flex:1;display:flex;min-height:0}.tabs{width:28px;background:#1b1b1b;display:flex;flex-direction:column;gap:2px;padding-top:9px;flex:none}.tabs button{height:26px;margin-left:2px;border-radius:4px 0 0 4px}.tabs .gap{margin-bottom:8px}.tabs .on{background:#303030;margin-bottom:8px}
.c{flex:1;min-width:0;padding:10px 6px 0 8px;display:flex;flex-direction:column;overflow:hidden}.bc{display:flex;align-items:center;height:19px;white-space:nowrap;padding-left:2px}.bc span{margin-left:8px}.bc .s{margin:0 5px 0 11px;width:14px}.bc .p{margin-left:auto;margin-right:2px;color:#999}
.ls{display:flex;gap:10px;margin:18px 1px 5px 1px}.box{flex:1;height:80px;background:#282828;border:1px solid #3a3a3a;border-radius:3px;padding:4px;display:flex;flex-direction:column;justify-content:space-between}
.it{display:flex;align-items:center;height:19px;background:#46464a;border-radius:3px;padding-left:3px;gap:7px;width:100%;justify-content:flex-start}.ft{display:flex;align-items:center;justify-content:space-between;padding:0 106px 0 1px}
.sd{display:flex;flex-direction:column;width:18px}.sd bl-button{width:18px}.pm{display:flex;flex-direction:column;gap:1px;margin-bottom:8px}
.db{display:flex;gap:9px;margin:0 1px 10px}.db bl-datablock{flex:1;min-width:0}bl-panel{margin-bottom:2px;flex:none}`,
 `<div class="h"><bl-button icon="props" menu="1" label="Editor type" style="width:30px"></bl-button><bl-search label="Search properties"></bl-search><bl-button menu="1" label="Options" style="width:19px"></bl-button></div>
<div class="m"><nav class="tabs">${tabs.map(([n,c,g])=>`<button class="${g==1?'gap':g==2?'on':''}" aria-label="${n}">${ic(n,c)}</button>`).join('')}</nav>
<div class="c"><div class="bc">${ic('object')}<span>Object FL</span><bl-icon class="s" name="right"></bl-icon>${ic('material')}<span>Paving Ston...et and Dirty</span><bl-icon class="p" name="pin"></bl-icon></div>
<div class="ls"><div class="box"><button class="it">${ic('stone')}Paving Stone Worn, Wet and Dirty</button><div class="ft">${ic('tright','#aaa')}${ic('grip','#bbb')}</div></div><div class="sd"><div class="pm"><bl-button lit icon="plus" label="Add slot"></bl-button><bl-button lit icon="minus" label="Remove slot"></bl-button></div><bl-button menu="1" label="Slot specials"></bl-button></div></div>
<div class="db"><bl-datablock icon="material" users="3" label="Material" value="Paving Sto...et and Dirty"></bl-datablock><bl-button icon="mesh" menu="1" label="Link" style="width:30px"></bl-button></div>
<bl-panel title="Preview"></bl-panel>
<bl-panel title="Surface" open="1"><bl-prop label="Surface" type="link" c="s" value="Principled BSDF" style="margin-bottom:11px"></bl-prop>
<bl-prop type="sel" value="GGX"></bl-prop><bl-prop type="sel" value="Random Walk"></bl-prop><bl-prop label="Base Color" type="link" open="1" c="y" value="Multiply"></bl-prop>
<bl-prop label="Subsurface" value="0.000"></bl-prop><bl-prop label="Subsurface Radius" type="vec" c="v" value="1.000,0.200,0.100"></bl-prop><bl-prop label="Subsurface Color" type="col" c="y" value="#e7e7e7"></bl-prop>
<bl-prop label="Subsurface IOR" value="1.400" fill="12"></bl-prop><bl-prop label="Subsurface Anisot..." value="0.000"></bl-prop><bl-prop label="Metallic" type="link" open="1" value="Paving Ston...Metallic.jpg"></bl-prop><bl-prop label="Specular" type="link" open="1" value="Invert"></bl-prop>
<bl-prop label="Specular Tint" value="0.000"></bl-prop><bl-prop label="Roughness" type="link" open="1" value="ColorRamp"></bl-prop><bl-prop label="Anisotropic" value="0.000"></bl-prop><bl-prop label="Anisotropic Rotati..." value="0.000"></bl-prop><bl-prop label="Sheen" value="0.000"></bl-prop><bl-prop label="Sheen Tint" value="0.500" fill="50"></bl-prop></bl-panel></div></div>`);

def('bl-app',`:host{display:flex;flex-direction:column;height:100vh}main{flex:1;min-height:0;display:grid;grid-template-columns:1fr 330px;gap:4px;padding-right:2px}
aside{display:flex;flex-direction:column;gap:4px;min-height:0;padding:2px 0 1px}`,
 `<bl-titlebar></bl-titlebar><bl-topbar></bl-topbar><main><bl-editor></bl-editor><aside><bl-outliner></bl-outliner><bl-properties></bl-properties></aside></main><bl-statusbar></bl-statusbar>`);
</script>
</body>
</html>
